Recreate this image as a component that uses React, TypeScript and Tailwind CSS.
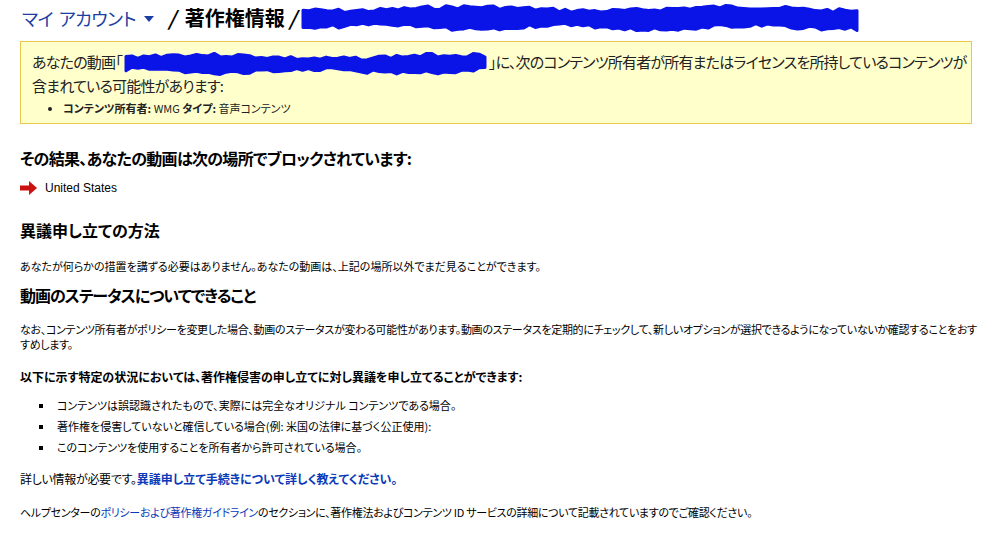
// Copyright notice page (YouTube, Japanese) — static recreation.
const jp = "font-['Noto_Sans_CJK_JP','Noto_Sans',sans-serif] [font-feature-settings:'palt']";

function Scribble({ w, h, seed }: { w: number; h: number; seed: number }) {
  // rough marker-style redaction blob
  const pts: string[] = [];
  const n = Math.floor(w / 6);
  let r = seed;
  const rnd = () => {
    r = (r * 9301 + 49297) % 233280;
    return r / 233280;
  };
  for (let i = 0; i <= n; i++) {
    const x = (i / n) * (w - 8) + 4;
    const wave = Math.sin(i / 7 + seed) * 2;
    pts.push(`${x.toFixed(1)},${(3 + wave + rnd() * 4).toFixed(1)}`);
  }
  for (let i = n; i >= 0; i--) {
    const x = (i / n) * (w - 8) + 4;
    const wave = Math.cos(i / 5 + seed) * 2;
    pts.push(`${x.toFixed(1)},${(h - 3 + wave - rnd() * 4).toFixed(1)}`);
  }
  return (
    <svg width={w} height={h} viewBox={`0 0 ${w} ${h}`} className="inline-block align-middle">
      <polygon points={pts.join(" ")} fill="#0a14e6" stroke="#0a14e6" strokeWidth="3" strokeLinejoin="round" />
    </svg>
  );
}

function RedArrow() {
  return (
    <svg width="17" height="14" viewBox="0 0 17 14" className="shrink-0">
      <path d="M0 4.5h9V0l8 7-8 7V9.5H0z" fill="#cc1111" />
    </svg>
  );
}

export default function App() {
  return (
    <div className={`min-h-screen bg-white px-5 text-black ${jp}`}>
      {/* breadcrumb */}
      <div className="flex h-9 items-center text-[20px] leading-none">
        <span className="ml-[2px] text-[18px] tracking-[-0.5px] text-[#1b3ea3]">
          マイ<span className="ml-[6px]">アカウント</span>
        </span>
        <svg width="10" height="6" viewBox="0 0 10 6" className="ml-[8px] mt-[2px]">
          <path d="M0 0h10L5 6z" fill="#1b3ea3" />
        </svg>
        <span className="ml-[14px] font-bold italic">/</span>
        <span className="ml-[9px] font-bold">著作権情報</span>
        <span className="ml-[4px] font-bold italic">/</span>
        <span className="ml-[3px] flex">
          <Scribble w={562} h={28} seed={7} />
        </span>
      </div>

      {/* notice box */}
      <div className="mt-[5px] h-[83px] border border-[#e8c94e] bg-[#ffffcc] px-[11px] pt-[10px]">
        <p className="whitespace-nowrap text-[15px] leading-[20px] tracking-[-0.8px] text-[#222]">
          あなたの動画「
          <Scribble w={367} h={24} seed={3} />
          」に、次のコンテンツ所有者が所有またはライセンスを所持しているコンテンツが
          <br />
          含まれている可能性があります:
        </p>
        <ul className="mt-[4px] list-disc pl-[31px] text-[11px] leading-[16px] text-[#222]">
          <li>
            <b>コンテンツ所有者:</b> WMG <b>タイプ:</b> 音声コンテンツ
          </li>
        </ul>
      </div>

      <h2 className="mt-[23px] text-[16px] font-bold leading-[22px] tracking-[-0.7px]">
        その結果、あなたの動画は次の場所でブロックされています:
      </h2>
      <div className="mt-[11px] flex items-center gap-[8px] text-[12px] leading-[16px]">
        <RedArrow />
        <span className="font-['Liberation_Sans',sans-serif]">United States</span>
      </div>

      <h2 className="mt-[23px] text-[16px] font-bold leading-[22px]">異議申し立ての方法</h2>
      <p className="mt-[17px] text-[11px] leading-[16px]">
        あなたが何らかの措置を講ずる必要はありません。あなたの動画は、上記の場所以外でまだ見ることができます。
      </p>

      <h2 className="mt-[10px] text-[16px] font-bold leading-[22px] tracking-[-1px]">
        動画のステータスについてできること
      </h2>
      <p className="mt-[16px] whitespace-nowrap text-[11px] leading-[15px] tracking-[-0.3px]">
        なお、コンテンツ所有者がポリシーを変更した場合、動画のステータスが変わる可能性があります。動画のステータスを定期的にチェックして、新しいオプションが選択できるようになっていないか確認することをおす
        <br />
        すめします。
      </p>

      <p className="mt-[17px] text-[12px] font-bold leading-[16px]">
        以下に示す特定の状況においては、著作権侵害の申し立てに対し異議を申し立てることができます:
      </p>
      <ul className="mt-[10px] list-[square] pl-[34px] text-[11px] leading-[21px]">
        <li className="pl-[3px]">コンテンツは誤認識されたもので、実際には完全なオリジナル コンテンツである場合。</li>
        <li className="pl-[3px]">著作権を侵害していないと確信している場合(例: 米国の法律に基づく公正使用):</li>
        <li className="pl-[3px]">このコンテンツを使用することを所有者から許可されている場合。</li>
      </ul>

      <p className="mt-[13px] text-[12px] leading-[16px]">
        <span className="tracking-[-0.3px]">詳しい情報が必要です。</span>
        <a className="font-bold text-[#0a3ab8]">異議申し立て手続きについて詳しく教えてください。</a>
      </p>
      <p className="mt-[17px] text-[11px] leading-[16px] tracking-[-0.3px]">
        ヘルプセンターの<a className="text-[#0a3ab8]">ポリシーおよび著作権ガイドライン</a>
        のセクションに、著作権法およびコンテンツ ID サービスの詳細について記載されていますのでご確認ください。
      </p>
    </div>
  );
}
